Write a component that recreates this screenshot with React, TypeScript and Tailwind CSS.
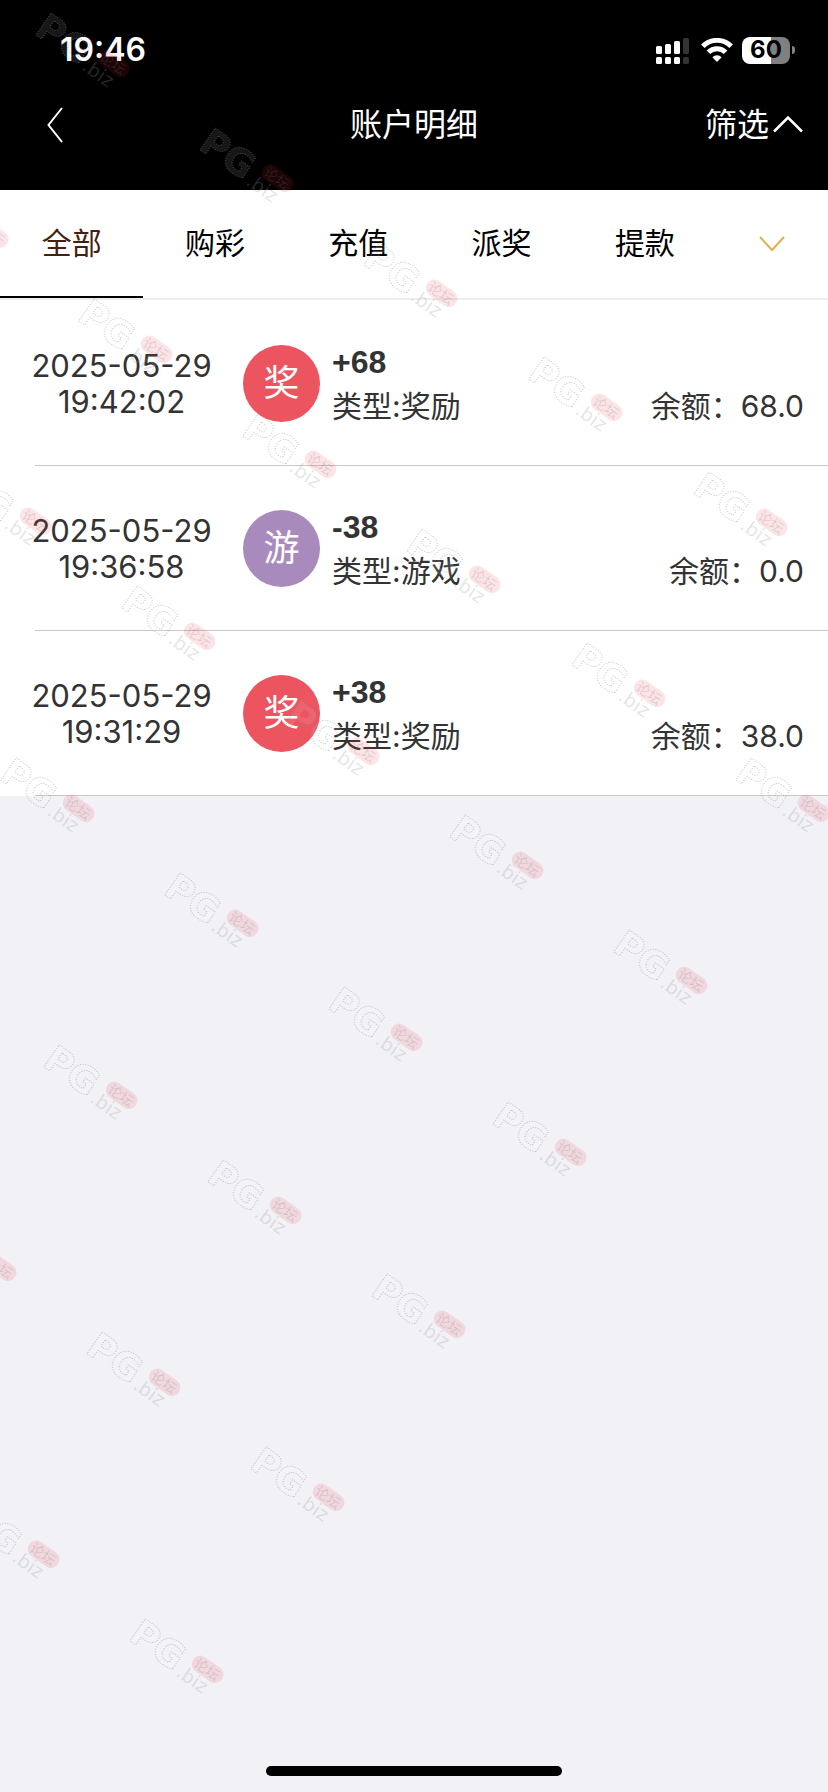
import { useState } from "react";
import clsx from "clsx";

interface RecordItem {
    id: number;
    date: string;
    time: string;
    badge: string;
    amount: string;
    type: string;
    balance: string;
}

const TABS = ["全部", "购彩", "充值", "派奖", "提款"];

const RECORDS: RecordItem[] = [
    { id: 1, date: "2025-05-29", time: "19:42:02", badge: "奖", amount: "+68", type: "奖励", balance: "68.0" },
    { id: 2, date: "2025-05-29", time: "19:36:58", badge: "游", amount: "-38", type: "游戏", balance: "0.0" },
    { id: 3, date: "2025-05-29", time: "19:31:29", badge: "奖", amount: "+38", type: "奖励", balance: "38.0" },
];

// Watermark anchors: top-left corner of the "P" in each mark
const MARKS = [
    [50, 12], [214, 127], [378, 242], [543, 356], [708, 471],
    [-71, 183], [93, 298], [257, 413], [421, 528], [586, 642], [750, 757],
    [-28, 470], [136, 585], [300, 700], [464, 814], [628, 929],
    [15, 757], [179, 872], [343, 986], [507, 1101],
    [58, 1044], [222, 1159], [386, 1273],
    [-63, 1216], [101, 1331], [265, 1446],
    [-20, 1503], [144, 1618],
];

function SignalIcon() {
    return (
        <svg width="33" height="27" viewBox="0 0 33 27" fill="#fff" aria-hidden="true">
            <rect x="0" y="9" width="6" height="8" rx="1.5" />
            <rect x="9" y="7" width="6" height="10" rx="1.5" />
            <rect x="18" y="4" width="6" height="13" rx="1.5" />
            <rect x="27" y="1" width="6" height="16" rx="1.5" fill="#333" />
            <rect x="0" y="20" width="6" height="7" rx="1.5" />
            <rect x="9" y="20" width="6" height="7" rx="1.5" />
            <rect x="18" y="20" width="6" height="7" rx="1.5" />
            <rect x="27" y="20" width="6" height="7" rx="1.5" fill="#333" />
        </svg>
    );
}

function WifiIcon() {
    return (
        <svg width="32" height="24" viewBox="0 0 32 24" aria-hidden="true">
            <g fill="none" stroke="#fff" strokeWidth="5">
                <path d="M1.8 8.2a20.2 20.2 0 0 1 28.4 0" />
                <path d="M7.4 14.2a12.2 12.2 0 0 1 17.2 0" />
            </g>
            <path d="M16 24l-4.6-4.8a6.6 6.6 0 0 1 9.2 0z" fill="#fff" />
        </svg>
    );
}

function StatusBar() {
    return (
        <div className="flex h-[100px] items-center justify-between pr-[33px] pl-[60px]">
            <span className="text-[32px] leading-10 font-semibold">19:46</span>
            <div className="flex items-center">
                <SignalIcon />
                <span className="ml-3">
                    <WifiIcon />
                </span>
                <span className="ml-[9px] flex h-[27px] w-12 items-center justify-center rounded-lg bg-linear-to-r from-white from-60% to-[#808080] to-60% text-2xl leading-none font-bold text-black">
                    60
                </span>
                <span className="ml-0.5 h-2 w-[3px] rounded-r-full bg-[#808080]" />
            </div>
        </div>
    );
}

function NavBar() {
    return (
        <nav className="grid h-[50px] grid-cols-[1fr_auto_1fr] items-center px-[25px] text-[32px] leading-[50px]">
            <button type="button" aria-label="返回" className="justify-self-start pl-5">
                <svg width="18" height="38" viewBox="0 0 18 38" fill="none" stroke="#fff" strokeWidth="2">
                    <path d="M17 2L3.5 19L17 36" />
                </svg>
            </button>
            <h1>账户明细</h1>
            <button type="button" className="flex items-center gap-1 justify-self-end">
                筛选
                <svg width="30" height="18" viewBox="0 0 30 18" fill="none" stroke="#fff" strokeWidth="2.5">
                    <path d="M1 15.5L15 1.5L29 15.5" />
                </svg>
            </button>
        </nav>
    );
}

function RecordRow({ record }: { record: RecordItem }) {
    return (
        <li className="bg-white">
            <div className="flex h-[164px] items-center pr-6 text-[#333]">
                <div className="w-[243px] shrink-0 pt-0.5 text-center text-[31px] leading-9">
                    <p>{record.date}</p>
                    <p>{record.time}</p>
                </div>
                <div
                    className={clsx(
                        "flex size-[77px] shrink-0 items-center justify-center rounded-full text-[36px] text-white",
                        record.badge === "游" ? "bg-[#a98abd]" : "bg-[#ec5460]",
                    )}
                >
                    {record.badge}
                </div>
                <div className="ml-3 flex-1 pt-0.5">
                    <p className="font-['Liberation_Sans',sans-serif] text-[32px] leading-[44px] font-bold">{record.amount}</p>
                    <div className="flex justify-between text-[30px] leading-[44px]">
                        <span>类型:{record.type}</span>
                        <span>余额：{record.balance}</span>
                    </div>
                </div>
            </div>
            <div className="ml-[35px] h-px bg-[#c8c8c8]" />
        </li>
    );
}

function Watermark() {
    return (
        <svg className="pointer-events-none absolute inset-0 size-full" aria-hidden="true">
            <defs>
                <g id="mark" transform="rotate(35)" fontFamily="DejaVu Sans, sans-serif">
                    <text
                        x="-2"
                        y="27"
                        fontSize="37"
                        fontWeight="700"
                        fill="#fff"
                        fillOpacity="0.1"
                        stroke="#888"
                        strokeOpacity="0.5"
                        strokeDasharray="1 1.6"
                    >
                        PG
                    </text>
                    <rect x="64" y="-3" width="35" height="17" rx="8.5" fill="#f01e32" fillOpacity="0.12" />
                    <text x="67" y="11" fontSize="14" fill="#777" fillOpacity="0.22" fontFamily="Noto Sans CJK SC, sans-serif">
                        论坛
                    </text>
                    <text x="58" y="29" fontSize="19" fill="#999" fillOpacity="0.25">
                        .biz
                    </text>
                </g>
            </defs>
            {MARKS.map(([x, y]) => (
                <use key={`${x},${y}`} href="#mark" x={x} y={y} />
            ))}
        </svg>
    );
}

export default function App() {
    const [active, setActive] = useState(TABS[0]);

    return (
        <div className="relative flex min-h-screen flex-col overflow-hidden bg-[#f2f1f6] font-['Inter','Noto_Sans_CJK_SC',sans-serif]">
            <header className="bg-black pb-10 text-white">
                <StatusBar />
                <NavBar />
            </header>

            <div role="tablist" className="grid h-[110px] grid-cols-[repeat(5,9fr)_7fr] border-b-2 border-[#eee] bg-white text-[30px]">
                {TABS.map((tab) => (
                    <button
                        key={tab}
                        type="button"
                        role="tab"
                        aria-selected={tab === active}
                        onClick={() => setActive(tab)}
                        className={clsx(
                            "border-b-2",
                            tab === active ? "border-black text-[#42210f]" : "border-transparent text-black",
                        )}
                    >
                        {tab}
                    </button>
                ))}
                <button type="button" aria-label="更多" className="flex items-center justify-center">
                    <svg width="26" height="16" viewBox="0 0 26 16" fill="none" stroke="#e3b04f" strokeWidth="2">
                        <path d="M1 1L13 14L25 1" />
                    </svg>
                </button>
            </div>

            <ul className="bg-white pt-px">
                {RECORDS.map((record) => (
                    <RecordRow key={record.id} record={record} />
                ))}
            </ul>

            <div className="mx-auto mt-auto mb-4 h-2.5 w-[296px] rounded-full bg-black" />

            <Watermark />
        </div>
    );
}
